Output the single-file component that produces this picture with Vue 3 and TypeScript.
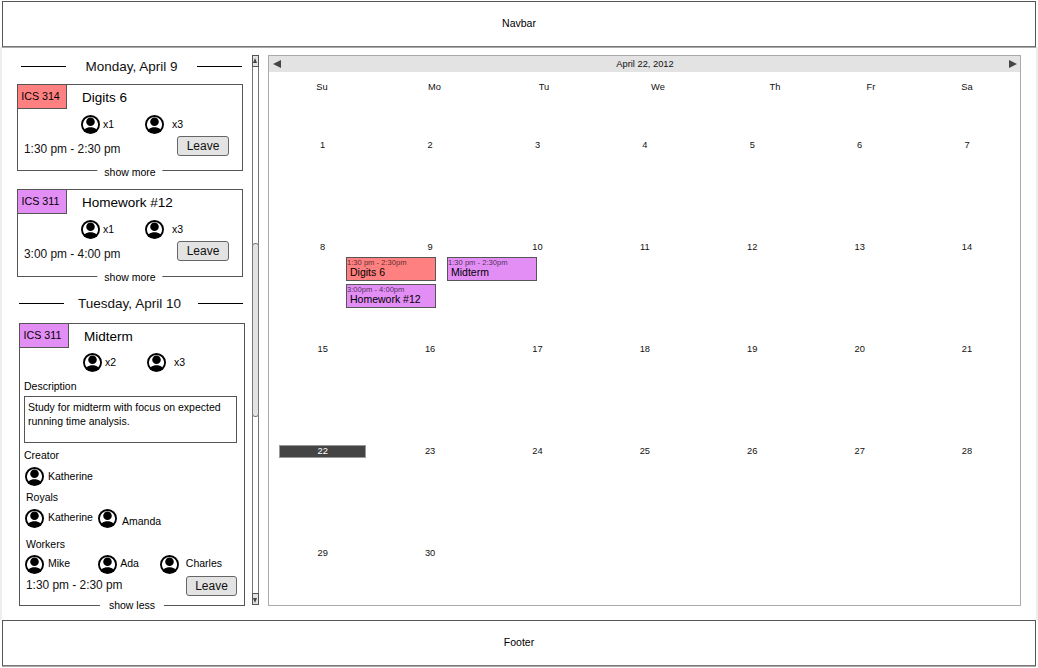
<script setup lang="ts">
const dayNames = ['Su', 'Mo', 'Tu', 'We', 'Th', 'Fr', 'Sa']
const dates = Array.from({ length: 30 }, (_, i) => i + 1)
const selected = 22
</script>

<template>
  <div class="page">
    <svg class="defs" width="0" height="0">
      <symbol id="user" viewBox="2 2 20 20">
        <circle cx="12" cy="12" r="10" fill="#000" />
        <path fill="#fff" d="M5.800 17.100A8 8 0 1 1 18.200 17.100C16.200 15.700 14.200 15 12 15s-4.200.7-6.200 2.100z" />
        <circle cx="12" cy="9" r="4.500" fill="#000" />
      </symbol>
    </svg>

    <header class="bar">Navbar</header>

    <main class="main">
      <aside class="side">
        <div class="day">
          <span class="rule"></span>
          <span>Monday, April 9</span>
          <span class="rule"></span>
        </div>

        <section class="card">
          <div class="head">
            <span class="tag red">ICS 314</span>
            <span class="title">Digits 6</span>
          </div>
          <div class="counts">
            <svg class="user"><use href="#user" /></svg>
            <span class="n1">x1</span>
            <svg class="user"><use href="#user" /></svg>
            <span class="n2">x3</span>
          </div>
          <div class="foot">
            <span class="time">1:30 pm - 2:30 pm</span>
            <button class="leave" type="button">Leave</button>
          </div>
          <span class="more">show more</span>
        </section>

        <section class="card second">
          <div class="head">
            <span class="tag purple">ICS 311</span>
            <span class="title">Homework #12</span>
          </div>
          <div class="counts">
            <svg class="user"><use href="#user" /></svg>
            <span class="n1">x1</span>
            <svg class="user"><use href="#user" /></svg>
            <span class="n2">x3</span>
          </div>
          <div class="foot">
            <span class="time">3:00 pm - 4:00 pm</span>
            <button class="leave" type="button">Leave</button>
          </div>
          <span class="more">show more</span>
        </section>

        <div class="day tuesday">
          <span class="rule"></span>
          <span class="day-text">Tuesday, April 10</span>
          <span class="rule"></span>
        </div>

        <section class="card open">
          <div class="head">
            <span class="tag purple">ICS 311</span>
            <span class="title">Midterm</span>
          </div>
          <div class="counts">
            <svg class="user"><use href="#user" /></svg>
            <span class="n1">x2</span>
            <svg class="user"><use href="#user" /></svg>
            <span class="n2">x3</span>
          </div>

          <div class="label desc-label">Description</div>
          <div class="desc">Study for midterm with focus on expected running time analysis.</div>

          <div class="label creator-label">Creator</div>
          <div class="people creator">
            <svg class="user"><use href="#user" /></svg>
            <span class="name">Katherine</span>
          </div>

          <div class="label royals-label">Royals</div>
          <div class="people royals">
            <svg class="user"><use href="#user" /></svg>
            <span class="name up">Katherine</span>
            <svg class="user"><use href="#user" /></svg>
            <span class="name down">Amanda</span>
          </div>

          <div class="label workers-label">Workers</div>
          <div class="people workers">
            <svg class="user"><use href="#user" /></svg>
            <span class="name w1">Mike</span>
            <svg class="user"><use href="#user" /></svg>
            <span class="name w2">Ada</span>
            <svg class="user"><use href="#user" /></svg>
            <span class="name w3">Charles</span>
          </div>

          <div class="foot open-foot">
            <span class="time">1:30 pm - 2:30 pm</span>
            <button class="leave" type="button">Leave</button>
          </div>
          <span class="more less">show less</span>
        </section>
      </aside>

      <div class="scroll">
        <span class="arrow top"></span>
        <span class="thumb"></span>
        <span class="arrow bottom"></span>
      </div>

      <section class="cal">
        <div class="cal-head">
          <span class="tri left"></span>
          <span>April 22, 2012</span>
          <span class="tri right"></span>
        </div>
        <div class="names">
          <span v-for="d in dayNames" :key="d">{{ d }}</span>
        </div>
        <div class="dates">
          <div v-for="d in dates" :key="d" class="cell">
            <span class="date" :class="{ active: d === selected }">{{ d }}</span>
          </div>
        </div>

        <div class="event red ev-digits">
          <span class="ev-time">1:30 pm - 2:30pm</span>
          <span class="ev-title">Digits 6</span>
        </div>
        <div class="event purple ev-hw">
          <span class="ev-time">3:00pm - 4:00pm</span>
          <span class="ev-title">Homework #12</span>
        </div>
        <div class="event purple ev-mid">
          <span class="ev-time">1:30 pm - 2:30pm</span>
          <span class="ev-title">Midterm</span>
        </div>
      </section>
    </main>

    <footer class="bar">Footer</footer>
  </div>
</template>

<style>
html,
body {
  margin: 0;
  background: #fff;
}
</style>

<style scoped>
.page {
  width: 1038px;
  height: 668px;
  overflow: hidden;
  box-sizing: border-box;
  padding-top: 1px;
  font-family: "Liberation Sans", Arial, sans-serif;
  color: #000;
  background: #fff;
}

.defs {
  position: absolute;
}

.bar {
  box-sizing: border-box;
  height: 46px;
  margin: 0 2px;
  padding-bottom: 2px;
  border: 1px solid #555;
  border-bottom-color: #777;
  box-shadow: 0 1px 0 #aaa;
  display: flex;
  align-items: center;
  justify-content: center;
  font-size: 10.5px;
}

.main {
  box-sizing: border-box;
  height: 573px;
  padding-top: 8px;
  display: flex;
  align-items: flex-start;
  border-left: 2px solid #eee;
  border-right: 2px solid #eee;
}

.side {
  box-sizing: border-box;
  width: 249px;
  padding-left: 15px;
}

.day {
  width: 221px;
  height: 22px;
  margin: 0 0 7px 4px;
  display: grid;
  grid-template-columns: 45px 1fr 45px;
  align-items: center;
  text-align: center;
  font-size: 13.5px;
  color: #111;
}

.rule {
  height: 1px;
  background: #000;
}

.tuesday {
  width: 224px;
  margin: 15px 0 9px 2px;
}

.day-text {
  padding-right: 3px;
}

.card {
  position: relative;
  box-sizing: border-box;
  width: 226px;
  height: 87px;
  border: 1px solid #555;
}

.card.second {
  margin-top: 18px;
  height: 88px;
}

.card.open {
  margin-left: 2px;
  height: 283px;
}

.head {
  display: flex;
  height: 24px;
}

.tag {
  box-sizing: border-box;
  width: 50px;
  height: 25px;
  margin: -1px 0 0 -1px;
  padding: 0 3px 2px 0;
  border: 1px solid #555;
  display: flex;
  align-items: center;
  justify-content: center;
  font-size: 10.7px;
}

.red {
  background: #ff8080;
}

.purple {
  background: #e38ef5;
}

.title {
  margin-left: 15px;
  font-size: 13.5px;
  line-height: 25px;
}

.counts {
  display: flex;
  align-items: center;
  height: 20px;
  margin-top: 5px;
  padding-left: 63px;
  font-size: 10.5px;
}

.open .counts {
  margin-top: 4px;
}

.user {
  width: 19px;
  height: 19px;
  flex: none;
}

.n1 {
  margin: 0 31px 0 3px;
}

.n2 {
  margin-left: 8px;
}

.foot {
  display: flex;
  align-items: flex-start;
  justify-content: space-between;
  padding: 2px 13px 0 6px;
}

.time {
  margin-top: 6px;
  font-size: 11.9px;
  line-height: 14px;
  color: #111;
}

.leave {
  box-sizing: border-box;
  width: 52px;
  height: 20px;
  padding: 0;
  border: 1px solid #666;
  border-radius: 3px;
  background: #e3e3e3;
  font: 12px "Liberation Sans", Arial, sans-serif;
  color: #111;
}

.more {
  position: absolute;
  left: 50%;
  bottom: -9px;
  transform: translateX(-50%);
  padding: 0 7px;
  background: #fff;
  font-size: 10.5px;
  line-height: 13px;
  white-space: nowrap;
}

.second .more {
  bottom: -8px;
}

.more.less {
  bottom: -7px;
  padding: 0 9px;
}

.label {
  font-size: 10.5px;
  line-height: 13px;
}

.desc-label {
  margin: 8px 0 0 4px;
}

.desc {
  box-sizing: border-box;
  width: 213px;
  height: 47px;
  margin: 3px 0 0 4px;
  padding: 3px 3px 0;
  border: 1px solid #555;
  font-size: 10.5px;
  line-height: 14px;
}

.creator-label {
  margin: 6px 0 0 4px;
}

.people {
  display: flex;
  align-items: center;
  padding-left: 5px;
  font-size: 10.5px;
}

.name {
  line-height: 13px;
}

.creator {
  height: 20px;
  margin-top: 4px;
}

.creator .name {
  margin-left: 4px;
}

.royals-label {
  margin: 5px 0 0 6px;
}

.royals {
  height: 20px;
  margin-top: 4px;
}

.up {
  margin: -2px 0 0 4px;
}

.down {
  margin: 6px 0 0 5px;
}

.royals .user:nth-of-type(2) {
  margin-left: 5px;
}

.workers-label {
  margin: 10px 0 0 6px;
}

.workers {
  height: 20px;
  margin-top: 3px;
}

.w1 {
  margin: -1px 28px 0 4px;
}

.w2 {
  margin: -1px 21px 0 3px;
}

.w3 {
  margin: -1px 0 0 7px;
}

.open-foot {
  padding: 2px 7px 0 6px;
}

.open-foot .time {
  margin-top: 2px;
}

.open-foot .leave {
  width: 51px;
}

.scroll {
  position: relative;
  box-sizing: border-box;
  flex: none;
  width: 7px;
  height: 550px;
  margin: 0 9px 0 1px;
  border-left: 1px solid #777;
  border-right: 1px solid #777;
}

.arrow {
  position: absolute;
  left: -1px;
  width: 7px;
  height: 12px;
  box-sizing: border-box;
  border: 1px solid #555;
  background: #e3e3e3;
}

.arrow::after {
  content: "";
  position: absolute;
  left: 0;
  border-left: 2.5px solid transparent;
  border-right: 2.5px solid transparent;
}

.arrow.top {
  top: 0;
}

.arrow.top::after {
  top: 2px;
  border-bottom: 5px solid #444;
}

.arrow.bottom {
  bottom: 0;
}

.arrow.bottom::after {
  top: 4px;
  border-top: 5px solid #444;
}

.thumb {
  position: absolute;
  top: 188px;
  left: -1px;
  box-sizing: border-box;
  width: 7px;
  height: 174px;
  border: 1px solid #777;
  border-radius: 3px;
  background: #e3e3e3;
}

.cal {
  position: relative;
  box-sizing: border-box;
  flex: none;
  width: 753px;
  height: 551px;
  border: 1px solid #aaa;
  font-size: 9.3px;
  color: #111;
}

.cal-head {
  height: 16px;
  display: flex;
  align-items: center;
  justify-content: space-between;
  padding: 0 3px 0 4px;
  background: #e3e3e3;
}

.tri {
  border-top: 4.5px solid transparent;
  border-bottom: 4.5px solid transparent;
}

.tri.left {
  border-right: 8px solid #444;
}

.tri.right {
  border-left: 8px solid #444;
}

.names {
  display: grid;
  grid-template-columns: 106px 119px 100px 128px 106px 86px 106px;
  height: 67px;
  padding-top: 9px;
  box-sizing: border-box;
  text-align: center;
  line-height: 12px;
}

.dates {
  display: grid;
  grid-template-columns: repeat(7, 107.4px);
  grid-auto-rows: 102px;
}

.cell {
  display: flex;
  justify-content: center;
  align-items: flex-start;
}

.date {
  box-sizing: border-box;
  width: 87px;
  height: 13px;
  line-height: 13px;
  text-align: center;
}

.date.active {
  background: #444;
  color: #fff;
  outline: 1px solid #999;
  outline-offset: -1px;
}

.event {
  position: absolute;
  box-sizing: border-box;
  width: 90px;
  height: 24px;
  border: 1px solid #555;
  display: flex;
  flex-direction: column;
  overflow: hidden;
}

.ev-time {
  font-size: 7.6px;
  line-height: 10px;
  color: rgba(0, 0, 0, 0.7);
  white-space: nowrap;
}

.ev-title {
  padding-left: 3px;
  font-size: 10.5px;
  line-height: 9px;
  color: #000;
  white-space: nowrap;
}

.ev-digits {
  left: 77px;
  top: 201px;
}

.ev-hw {
  left: 77px;
  top: 228px;
}

.ev-mid {
  left: 178px;
  top: 201px;
}
</style>
